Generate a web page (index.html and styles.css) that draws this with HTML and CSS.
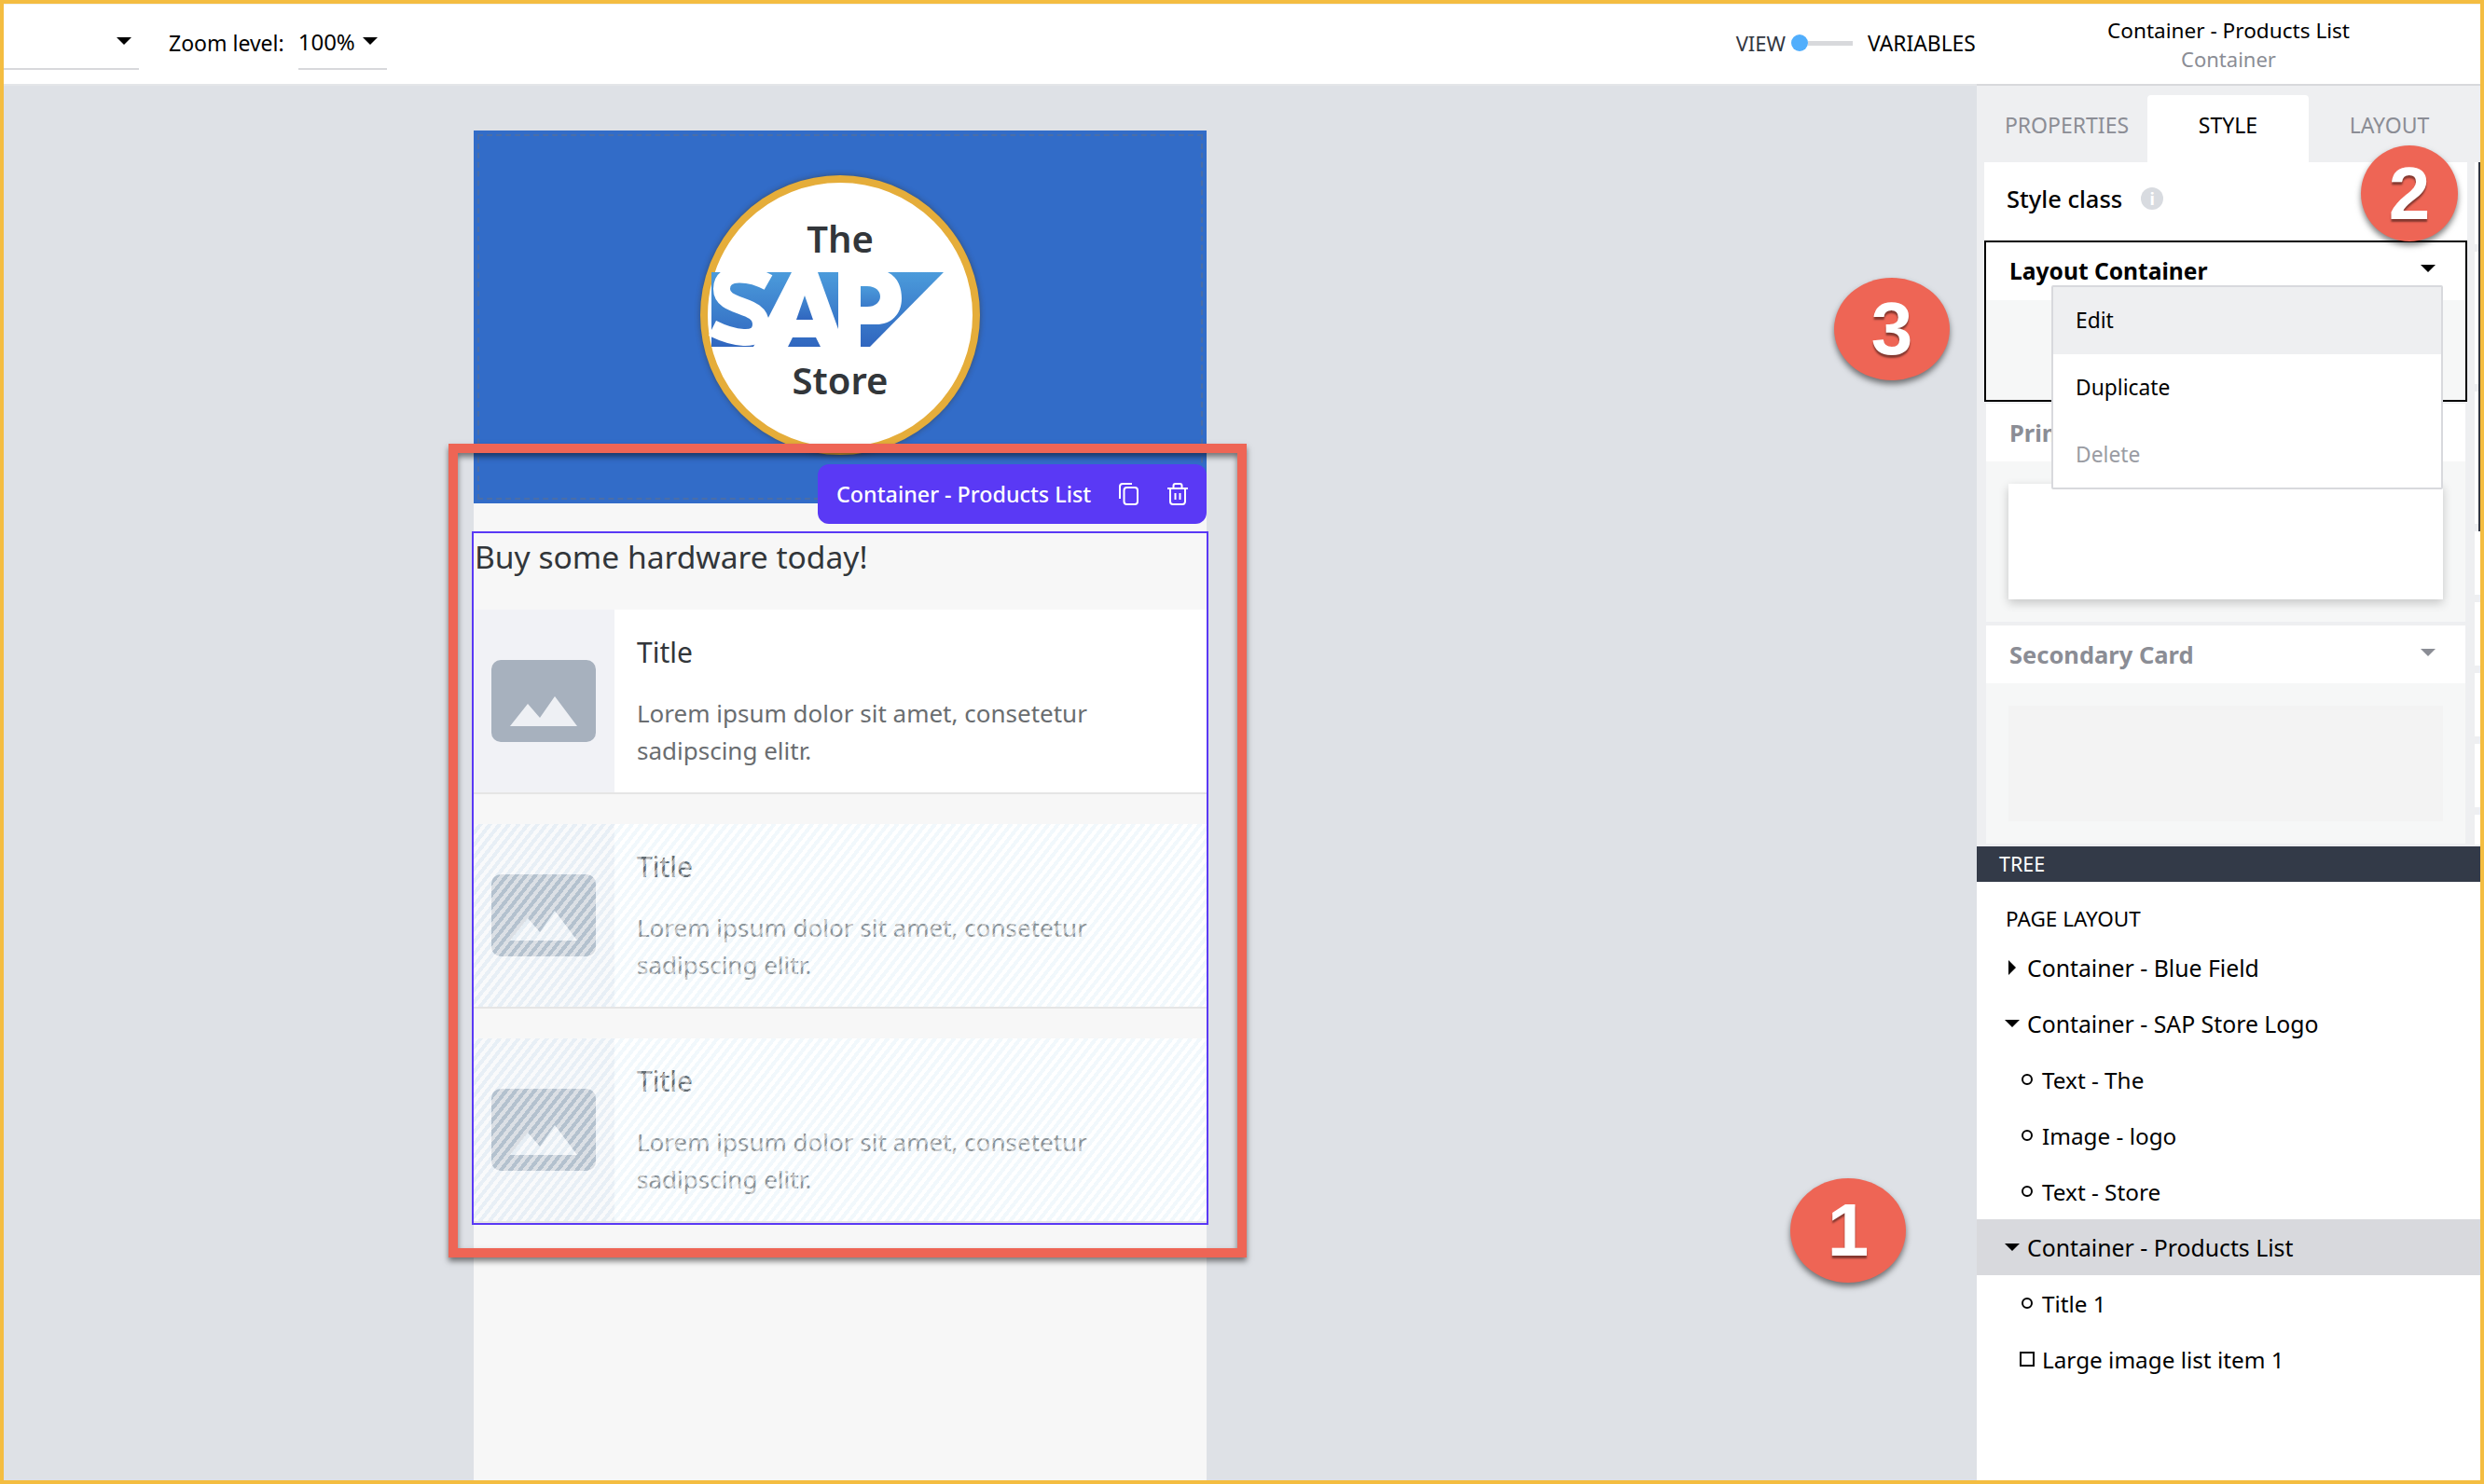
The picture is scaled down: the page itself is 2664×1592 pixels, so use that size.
FILE: index.html
```html
<!DOCTYPE html>
<html lang="en">
<head>
  <meta charset="UTF-8" />
  <title>Container - Products List</title>
  <link rel="stylesheet" href="styles.css">
</head>
<body>
  <header class="topbar">
    <div class="select select-page"><span class="caret"></span></div>
    <span class="zoom-label">Zoom level:</span>
    <div class="select select-zoom"><span>100%</span><span class="caret"></span></div>
    <div class="view-switch">
      <span class="view-label">VIEW</span>
      <div class="toggle"><span class="toggle-knob"></span><span class="toggle-track"></span></div>
      <span class="variables-label">VARIABLES</span>
    </div>
    <div class="topbar-title">
      <div class="title-main">Container - Products List</div>
      <div class="title-sub">Container</div>
    </div>
  </header>

  <div class="workspace">
    <main class="canvas">
      <div class="page">
        <div class="blue-field">
          <div class="logo-circle">
            <div class="logo-word logo-the">The</div>
            <svg class="sap-logo" width="280" height="100" viewBox="0 0 280 100">
              <defs>
                <linearGradient id="sapBlue" x1="0" y1="0" x2="0" y2="1">
                  <stop offset="0" stop-color="#4b9bdb" />
                  <stop offset="1" stop-color="#3066bf" />
                </linearGradient>
              </defs>
              <path d="M13 12H262L183 92H13Z" fill="url(#sapBlue)" />
              <path d="M74 23C56 13 24 8 24 30C24 52 66 44 66 68C66 90 34 82 14 72" fill="none" stroke="#fff" stroke-width="18" />
              <path d="M99 12H127L149 73V12H173 H202C214 18 217 30 217 40C217 58 205 68 190 68H173V92H130L125 82H100L95 92H58Z" fill="#fff" />
              <path d="M173 27H180C189 27 194 32 194 38C194 44 189 49 180 49H173ZM113 37L104 63H122Z" fill="url(#sapBlue)" />
            </svg>
            <div class="logo-word logo-store">Store</div>
          </div>
        </div>

        <div class="selection-tag">
          <span>Container - Products List</span>
          <svg class="tag-icon" width="22" height="24" viewBox="0 0 22 24" fill="none" stroke="#fff" stroke-width="2">
            <rect x="6.500" y="5" width="14.500" height="18" rx="3" />
            <path d="M2 17V4a3 3 0 0 1 3-3H15" />
          </svg>
          <svg class="tag-icon" width="22" height="24" viewBox="0 0 22 24" fill="none" stroke="#fff" stroke-width="2">
            <path d="M0 6H22M6.500 6V3a2 2 0 0 1 2-2h5a2 2 0 0 1 2 2V6" />
            <path d="M3 6V20a3 3 0 0 0 3 3H16a3 3 0 0 0 3-3V6" />
            <path d="M8.500 11V18M13.500 11V18" />
          </svg>
        </div>

        <section class="products">
          <h2 class="products-title">Buy some hardware today!</h2>

          <div class="list-item">
            <div class="thumb">
              <svg width="112" height="88" viewBox="0 0 112 88"><rect width="112" height="88" rx="10" fill="#a7b1be" /><path d="M20 71L39 47L52 62L68 39L92 71Z" fill="#eef0f4" /></svg>
            </div>
            <div class="item-text">
              <div class="item-title">Title</div>
              <p class="item-desc">Lorem ipsum dolor sit amet, consetetur sadipscing elitr.</p>
            </div>
          </div>

          <div class="list-item list-item-ghost">
            <div class="thumb">
              <svg width="112" height="88" viewBox="0 0 112 88"><rect width="112" height="88" rx="10" fill="#a7b1be" /><path d="M20 71L39 47L52 62L68 39L92 71Z" fill="#eef0f4" /></svg>
            </div>
            <div class="item-text">
              <div class="item-title">Title</div>
              <p class="item-desc">Lorem ipsum dolor sit amet, consetetur sadipscing elitr.</p>
            </div>
          </div>

          <div class="list-item list-item-ghost">
            <div class="thumb">
              <svg width="112" height="88" viewBox="0 0 112 88"><rect width="112" height="88" rx="10" fill="#a7b1be" /><path d="M20 71L39 47L52 62L68 39L92 71Z" fill="#eef0f4" /></svg>
            </div>
            <div class="item-text">
              <div class="item-title">Title</div>
              <p class="item-desc">Lorem ipsum dolor sit amet, consetetur sadipscing elitr.</p>
            </div>
          </div>
        </section>

        <div class="red-frame"></div>
      </div>
    </main>

    <aside class="panel">
      <nav class="tabs">
        <span class="tab">PROPERTIES</span>
        <span class="tab tab-active">STYLE</span>
        <span class="tab">LAYOUT</span>
      </nav>

      <div class="style-pane">
        <div class="style-col">
          <div class="style-class">
            <span>Style class</span>
            <span class="info-icon">i</span>
          </div>

          <div class="style-item style-item-open">
            <div class="style-head"><span>Layout Container</span><span class="caret"></span></div>
            <div class="menu">
              <div class="menu-row menu-row-hover">Edit</div>
              <div class="menu-row">Duplicate</div>
              <div class="menu-row menu-row-off">Delete</div>
            </div>
          </div>

          <div class="style-item">
            <div class="style-head style-head-off"><span>Primary Card</span><span class="caret caret-off"></span></div>
            <div class="style-body"><div class="card card-raised"></div></div>
          </div>

          <div class="style-item">
            <div class="style-head style-head-off"><span>Secondary Card</span><span class="caret caret-off"></span></div>
            <div class="style-body"><div class="card card-flat"></div></div>
          </div>
        </div>

        <div class="scroll-strip">
          <span></span><span></span><span></span><span></span><span></span><span></span><span></span><span></span>
          <div class="scroll-thumb"></div>
        </div>
      </div>

      <div class="tree-bar">TREE</div>
      <div class="tree">
        <div class="tree-heading">PAGE LAYOUT</div>
        <div class="tree-row"><span class="mark mark-closed"></span>Container - Blue Field</div>
        <div class="tree-row"><span class="mark mark-open"></span>Container - SAP Store Logo</div>
        <div class="tree-row tree-child"><span class="mark mark-dot"></span>Text - The</div>
        <div class="tree-row tree-child"><span class="mark mark-dot"></span>Image - logo</div>
        <div class="tree-row tree-child"><span class="mark mark-dot"></span>Text - Store</div>
        <div class="tree-row tree-row-selected"><span class="mark mark-open"></span>Container - Products List</div>
        <div class="tree-row tree-child"><span class="mark mark-dot"></span>Title 1</div>
        <div class="tree-row tree-child"><span class="mark mark-square"></span>Large image list item 1</div>
      </div>
    </aside>
  </div>

  <div class="step step-1">1</div>
  <div class="step step-2">2</div>
  <div class="step step-3">3</div>
</body>
</html>
```

FILE: styles.css
```css
* {
  box-sizing: border-box;
}
body {
  margin: 0;
  width: 2664px;
  height: 1592px;
  position: relative;
  overflow: hidden;
  border: 4px solid #f4bd41;
  font-family: 'Noto Sans', sans-serif;
  color: #000;
  background: #fff;
  display: flex;
  flex-direction: column;
}

/* top bar */
.topbar {
  height: 88px;
  flex: none;
  display: flex;
  align-items: center;
  background: #fff;
  border-top: 1px solid #f2f3f4;
  border-bottom: 2px solid #e4e6e9;
  font-size: 23px;
}
.select {
  align-self: flex-start;
  height: 70px;
  display: flex;
  align-items: center;
  border-bottom: 2px solid #d8d9dc;
  padding-top: 10px;
}
.select-page {
  width: 145px;
  justify-content: flex-end;
  padding-right: 8px;
}
.select-zoom {
  width: 95px;
  gap: 8px;
  font-size: 24px;
}
.zoom-label {
  margin: 0 15px 3px 32px;
}
.caret {
  width: 0;
  height: 0;
  flex: none;
  border-left: 8px solid transparent;
  border-right: 8px solid transparent;
  border-top: 8px solid #000;
}
.caret-off {
  border-top-color: #8b8d95;
}
.view-switch {
  margin-left: auto;
  display: flex;
  align-items: center;
  font-size: 22px;
  margin-bottom: 3px;
}
.view-label {
  color: #32363f;
  margin-right: 6px;
}
.toggle {
  width: 66px;
  display: flex;
  align-items: center;
}
.toggle-knob {
  width: 18px;
  height: 18px;
  border-radius: 50%;
  background: #51aefc;
}
.toggle-track {
  flex: 1;
  height: 5px;
  background: #d8d9dc;
}
.variables-label {
  margin-left: 16px;
  width: 117px;
  font-size: 22.800px;
}
.topbar-title {
  width: 540px;
  text-align: center;
  line-height: 30px;
  font-size: 22.600px;
}
.title-sub {
  color: #8b8d95;
  font-size: 22px;
}

.workspace {
  flex: 1;
  display: flex;
  min-height: 0;
}

/* canvas */
.canvas {
  width: 2116px;
  flex: none;
  background: #dee1e6;
  padding: 48px 0 0 504px;
}
.page {
  width: 786px;
  height: 100%;
  background: #f7f7f7;
  position: relative;
}
.blue-field {
  height: 400px;
  background: #326cc8;
  padding-top: 48px;
  outline: 2px dashed #4a6ea8;
  outline-offset: -6px;
}
.logo-circle {
  width: 300px;
  height: 300px;
  margin: 0 auto;
  background: #fff;
  border: 8px solid #e5ad3a;
  border-radius: 50%;
  box-shadow: 0 0 6px rgba(60,40,0,0.45);
  display: flex;
  flex-direction: column;
  align-items: center;
  position: relative;
  z-index: 1;
}
.logo-word {
  font-size: 40px;
  font-weight: 600;
  line-height: 50px;
  color: #32363a;
}
.logo-the {
  margin-top: 35px;
}
.sap-logo {
  margin: -1px 22px 3px 0;
  flex: none;
}
.selection-tag {
  position: absolute;
  z-index: 3;
  right: 0;
  top: 358px;
  width: 417px;
  height: 64px;
  background: #5a39f5;
  border-radius: 12px;
  color: #fff;
  font-size: 23.300px;
  font-weight: 500;
  display: flex;
  align-items: center;
  padding-left: 20px;
}
.tag-icon {
  flex: none;
  margin-left: 29px;
}
.selection-tag span {
  width: 273px;
  white-space: nowrap;
}
.tag-icon + .tag-icon {
  margin-left: 31px;
}
.products {
  margin: 30px -2px 0;
  height: 744px;
  border: 2px solid #5a39f5;
  position: relative;
  z-index: 2;
}
.products-title {
  margin: 0;
  height: 82px;
  padding-left: 1px;
  font-size: 33.600px;
  font-weight: 400;
  line-height: 50px;
  color: #32363a;
}
.list-item {
  height: 198px;
  display: flex;
  background: #fff;
  border-bottom: 2px solid #e5e5e5;
  position: relative;
}
.list-item + .list-item {
  margin-top: 32px;
}
.list-item-ghost::after {
  content: "";
  position: absolute;
  inset: 0;
  background: repeating-linear-gradient(128deg, rgba(255,255,255,0.6) 0 4px, rgba(210,232,245,0.3) 4px 8px);
}
.thumb {
  width: 151px;
  background: #f1f2f6;
  display: flex;
  align-items: center;
  justify-content: center;
  padding-right: 2px;
}
.item-text {
  flex: 1;
  padding: 21px 40px 0 24px;
}
.item-title {
  font-size: 30px;
  line-height: 50px;
  color: #32363a;
}
.item-desc {
  margin: 20px 0 0;
  font-size: 26px;
  line-height: 40px;
  color: #6a6d70;
}
.red-frame {
  position: absolute;
  z-index: 4;
  left: -27px;
  top: 336px;
  width: 856px;
  height: 873px;
  border: 10px solid #ee6555;
  box-shadow: 0 4px 6px rgba(0,0,0,0.5), inset 0 4px 6px rgba(0,0,0,0.5);
}

/* right panel */
.panel {
  width: 540px;
  flex: none;
  background: #eeeff1;
  border-top: 2px solid #d8d9dc;
  margin-top: -2px;
  display: flex;
  flex-direction: column;
}
.tabs {
  height: 82px;
  flex: none;
  padding: 10px 0 0 10px;
  display: flex;
}
.tab {
  width: 173px;
  text-align: center;
  line-height: 64px;
  font-size: 23px;
  color: #8b8d95;
  border-radius: 4px 4px 0 0;
}
.tab-active {
  background: #fff;
  color: #000;
}
.style-pane {
  height: 734px;
  flex: none;
  display: flex;
  padding-left: 8px;
  position: relative;
}
.style-col {
  width: 518px;
  flex: none;
}
.style-class {
  height: 84px;
  background: #fff;
  display: flex;
  align-items: center;
  padding: 0 0 6px 24px;
  font-size: 25.500px;
  font-weight: 500;
}
.info-icon {
  width: 24px;
  height: 24px;
  margin-left: 20px;
  border-radius: 50%;
  background: #d8dbe0;
  color: #fff;
  font-size: 18px;
  font-weight: 700;
  line-height: 24px;
  text-align: center;
}
.style-item {
  margin: 2px 2px 4px;
}
.style-item-open {
  margin: 0;
  height: 173px;
  border: 2px solid #000;
  background: #f6f7f7;
  position: relative;
}
.style-head {
  height: 62px;
  background: #fff;
  display: flex;
  align-items: center;
  justify-content: space-between;
  padding: 0 32px 2px 25px;
  font-size: 24.600px;
  font-weight: 700;
}
.style-head .caret {
  margin-top: -5px;
}
.style-head-off {
  color: #8b8d95;
  font-size: 25.500px;
  padding-bottom: 0;
}
.style-body {
  height: 172px;
  background: #f6f7f7;
  padding: 24px;
}
.card {
  height: 124px;
}
.card-raised {
  background: #fff;
  box-shadow: 0 4px 10px rgba(0,0,0,0.2);
}
.card-flat {
  background: #f3f3f3;
}
.menu {
  position: absolute;
  z-index: 5;
  left: 70px;
  top: 46px;
  width: 420px;
  height: 219px;
  background: #fff;
  border: 2px solid #d8d9dd;
  border-radius: 2px;
}
.menu-row {
  height: 72px;
  line-height: 72px;
  padding-left: 24px;
  font-size: 22.800px;
}
.menu-row-hover {
  background: #eeeff1;
}
.menu-row-off {
  color: #9a9ca3;
}
.scroll-strip {
  width: 6px;
  margin-left: 8px;
  height: 732px;
  overflow: hidden;
  display: flex;
  flex-direction: column;
  gap: 8px;
  position: relative;
}
.scroll-strip span {
  flex: none;
  height: 68px;
  background: #fff;
}
.scroll-strip span:nth-child(1) {
  height: 88px;
}
.scroll-strip span:nth-child(2),
.scroll-strip span:nth-child(3) {
  height: 142px;
}
.scroll-thumb {
  position: absolute;
  right: 0;
  top: 0;
  width: 2px;
  height: 396px;
  background: #32363f;
}
.tree-bar {
  height: 38px;
  flex: none;
  background: #333a48;
  color: #fff;
  font-size: 21.500px;
  line-height: 38px;
  padding-left: 24px;
}
.tree {
  flex: 1;
  background: #fff;
  padding-top: 20px;
  font-size: 24.800px;
}
.tree-heading {
  height: 42px;
  line-height: 40px;
  padding-left: 31px;
  font-size: 22.500px;
}
.tree-row {
  height: 60px;
  display: flex;
  align-items: center;
  padding-left: 30px;
  white-space: nowrap;
}
.tree-child {
  padding-left: 46px;
  font-size: 24.300px;
}
.tree-row-selected {
  background: #d8d9dd;
}
.mark {
  flex: none;
  width: 24px;
}
.mark-open {
  width: 0;
  height: 0;
  border-left: 8px solid transparent;
  border-right: 8px solid transparent;
  border-top: 8px solid #000;
  margin-right: 8px;
}
.mark-closed {
  width: 0;
  height: 0;
  border-top: 8px solid transparent;
  border-bottom: 8px solid transparent;
  border-left: 8px solid #000;
  margin: 0 12px 0 4px;
}
.mark-dot {
  width: 12px;
  height: 12px;
  border: 2px solid #000;
  border-radius: 50%;
  margin: 0 10px 0 2px;
}
.mark-square {
  width: 16px;
  height: 16px;
  border: 2px solid #000;
  margin-right: 8px;
}

/* numbered callouts */
.step {
  position: absolute;
  z-index: 10;
  border-radius: 50%;
  background: #ee6555;
  color: #fff;
  font-family: 'Liberation Sans', sans-serif;
  font-size: 80px;
  font-weight: 700;
  display: flex;
  align-items: center;
  justify-content: center;
  box-shadow: 0 4px 6px rgba(0,0,0,0.5);
  text-shadow: 0 3px 2px rgba(0,0,0,0.45);
}
.step-1 {
  left: 1916px;
  top: 1260px;
  width: 124px;
  height: 112px;
}
.step-2 {
  left: 2528px;
  top: 152px;
  width: 104px;
  height: 103px;
}
.step-3 {
  left: 1963px;
  top: 294px;
  width: 124px;
  height: 110px;
}
```
